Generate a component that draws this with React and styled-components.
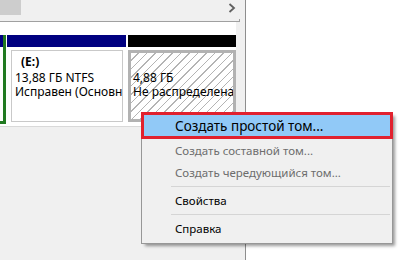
import styled, { createGlobalStyle } from 'styled-components';

const GlobalStyle = createGlobalStyle`
  html, body { margin: 0; padding: 0; background: #fff; }
  body { font-family: "Noto Sans", "Open Sans", sans-serif; }
`;

function App() {
  return (
    <Screen>
      <GlobalStyle />
      <LeftPane>
        <ScrollBar>
          <Thumb />
          <ArrowRight width="8" height="10" viewBox="0 0 8 10">
            <polyline points="1.5,1 6,5 1.5,9" fill="none" stroke="#606060" strokeWidth="1.8" />
          </ArrowRight>
        </ScrollBar>
        <ScrollEdge />
        <Strip>
          <Stub>
            <StubBar />
          </Stub>
          <Partition $width={119}>
            <Bar $color="#000080" />
            <Body $pad="3px 3px 2px 4px">
              <VolumeBox>
                <Label $bold>(E:)</Label>
                <Label>13,88 ГБ NTFS</Label>
                <Label>Исправен (Основной раздел)</Label>
              </VolumeBox>
            </Body>
          </Partition>
          <Partition $width={108}>
            <Bar $color="#000" />
            <Body $pad="3px 0 2px 0">
              <FreeBox>
                <Label>4,88 ГБ</Label>
                <Label>Не распределена</Label>
              </FreeBox>
            </Body>
          </Partition>
        </Strip>
      </LeftPane>
      <RightPane />
      <Menu>
        <Highlighted>Создать простой том...</Highlighted>
        <MenuItem $disabled>Создать составной том...</MenuItem>
        <MenuItem $disabled>Создать чередующийся том...</MenuItem>
        <Separator />
        <MenuItem>Свойства</MenuItem>
        <Separator />
        <MenuItem>Справка</MenuItem>
      </Menu>
    </Screen>
  );
}

const Screen = styled.div`
  position: relative;
  width: 402px;
  height: 260px;
  display: flex;
  overflow: hidden;
  background: #fff;
`;

const LeftPane = styled.div`
  width: 245px;
  flex: none;
  display: flex;
  flex-direction: column;
  background: #f0f0f0;
  border-right: 1px solid #8e8e8e;
`;

const RightPane = styled.div`
  flex: 1;
  background: #fff;
`;

const ScrollBar = styled.div`
  height: 19px;
  display: flex;
  align-items: flex-start;
  justify-content: space-between;
  padding-right: 9px;
`;

const Thumb = styled.div`
  width: 21px;
  height: 15px;
  background: #cdcdcd;
`;

const ArrowRight = styled.svg`
  margin-top: 3px;
`;

const ScrollEdge = styled.div`
  width: 239px;
  height: 2px;
  border-bottom: 1px solid #a0a0a0;
  border-right: 1px solid #a0a0a0;
`;

const Strip = styled.div`
  width: 236px;
  display: flex;
  padding: 13px 0 2px;
  background: #fff;
  border-bottom: 1px solid #d9d9d9;
`;

const Stub = styled.div`
  width: 6px;
  height: 89px;
  box-sizing: border-box;
  margin-right: 1px;
  border-right: 3px solid #217a21;
  border-bottom: 3px solid #217a21;
`;

const StubBar = styled.div`
  width: 3px;
  height: 12px;
  background: #000080;
`;

const Partition = styled.div`
  width: ${p => p.$width}px;
  height: 89px;
  display: flex;
  flex-direction: column;
  & + & { margin-left: 2px; }
`;

const Bar = styled.div`
  height: 12px;
  background: ${p => p.$color};
`;

const Body = styled.div`
  flex: 1;
  display: flex;
  padding: ${p => p.$pad};
`;

const VolumeBox = styled.div`
  flex: 1;
  min-width: 0;
  overflow: hidden;
  border: 1px solid #c9c9c9;
  padding: 4px 0 0 3px;
  background: #fff;
`;

const FreeBox = styled.div`
  flex: 1;
  min-width: 0;
  overflow: hidden;
  border: 3px solid #b2b2b2;
  padding: 18px 0 0 2px;
  background: repeating-linear-gradient(-45deg, #fff 0 5px, #b4b4b4 5px 6px);
`;

const Label = styled.div`
  font-size: 12px;
  line-height: 14px;
  white-space: nowrap;
  color: #000;
  font-weight: ${p => (p.$bold ? 700 : 400)};
  padding-left: ${p => (p.$bold ? '6px' : '0')};
  margin-bottom: ${p => (p.$bold ? '2px' : '0')};
`;

const Menu = styled.div`
  position: absolute;
  left: 141px;
  top: 112px;
  width: 252px;
  box-sizing: border-box;
  display: flex;
  flex-direction: column;
  padding-bottom: 4px;
  background: #f0f0f0;
  border: 1px solid #979797;
  box-shadow: 3px 3px 3px -1px rgba(0, 0, 0, 0.4);
`;

const MenuItem = styled.div`
  height: 22px;
  display: flex;
  align-items: center;
  padding-left: 33px;
  font-size: 11.5px;
  white-space: nowrap;
  color: ${p => (p.$disabled ? '#6d6d6d' : '#000')};
`;

const Highlighted = styled(MenuItem)`
  height: 27px;
  box-sizing: border-box;
  margin: -1px -1px 0;
  padding-left: 31px;
  font-size: 13.5px;
  border: 3px solid #e1212e;
  background: #91c9f7;
`;

const Separator = styled.div`
  height: 1px;
  margin: 3px 2px 2px 29px;
  background: #d5d5d5;
`;

export default App;
